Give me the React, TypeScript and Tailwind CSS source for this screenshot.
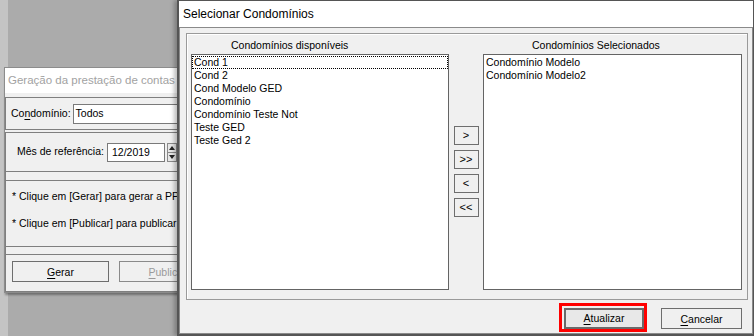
import React from 'react'

const FONT = { fontFamily: '"Liberation Sans", Arial, sans-serif' }

const disponiveis = ['Cond 1', 'Cond 2', 'Cond Modelo GED', 'Condomínio', 'Condomínio Teste Not', 'Teste GED', 'Teste Ged 2']
const selecionados = ['Condomínio Modelo', 'Condomínio Modelo2']

function Accel({ k, rest }: { k: string; rest: string }) {
  return (
    <>
      <span className="underline underline-offset-2">{k}</span>
      {rest}
    </>
  )
}

function MoveBtn({ label }: { label: string }) {
  return (
    <button className="flex h-[19px] w-[25px] items-center justify-center border border-[#6e6e6e] bg-[#f0f0f0] text-[11px] leading-none text-black">
      {label}
    </button>
  )
}

function BackWindow() {
  return (
    <div className="absolute left-[4px] top-[67px] flex h-[226px] w-[200px] flex-col border border-[#8c8c8c] bg-[#f0f0f0] text-[10.5px] text-black shadow-[1px_2px_2px_rgba(0,0,0,0.35)]">
      {/* title */}
      <div className="flex h-[25px] items-center bg-white pl-[3px] text-[11.5px] whitespace-nowrap text-[#a2a2a2]">Geração da prestação de contas</div>
      <div className="h-[4px]" />

      {/* condominio */}
      <div className="flex h-[33px] items-center border border-[#7f7f7f] pl-[5px]">
        <span className="mr-[2px] whitespace-nowrap">
          Co<span className="underline underline-offset-2">n</span>domínio:
        </span>
        <div className="h-[20px] flex-1 border border-[#7a7a7a] bg-white pl-[2px] leading-[16px]">Todos</div>
      </div>
      <div className="h-[2px]" />

      {/* mes */}
      <div className="flex h-[40px] items-center border border-[#7f7f7f] pl-[11px]">
        <span className="mr-[3px] whitespace-nowrap">Mês de referência:</span>
        <div className="h-[19px] w-[58px] border border-[#7a7a7a] bg-white pl-[4px] leading-[16px]">12/2019</div>
        <div className="ml-[2px] flex h-[19px] w-[10px] flex-col">
          <div className="flex flex-1 items-center justify-center border border-[#8a8a8a] bg-[#e8e8e8]">
            <svg width="6" height="4" viewBox="0 0 6 4"><path d="M3 0L6 4H0Z" fill="#222" /></svg>
          </div>
          <div className="flex flex-1 items-center justify-center border border-t-0 border-[#8a8a8a] bg-[#e8e8e8]">
            <svg width="6" height="4" viewBox="0 0 6 4"><path d="M0 0H6L3 4Z" fill="#222" /></svg>
          </div>
        </div>
      </div>
      <div className="h-[9px] border border-t-0 border-[#7f7f7f]" />

      {/* info */}
      <div className="flex h-[66px] flex-col border border-t-0 border-[#7f7f7f] pl-[6px] pt-[7px] whitespace-nowrap">
        <div className="leading-[16px]">* Clique em [Gerar] para gerar a PPC</div>
        <div className="mt-[11px] leading-[16px]">* Clique em [Publicar] para publicar</div>
      </div>
      <div className="h-[8px] border border-t-0 border-[#7f7f7f]" />

      {/* buttons */}
      <div className="flex flex-1 items-start gap-[10px] border border-t-0 border-[#7f7f7f] pl-[6px] pt-[6px]">
        <button className="h-[21px] w-[97px] shrink-0 border border-[#6e6e6e] bg-[#f0f0f0] leading-[18px]">
          <Accel k="G" rest="erar" />
        </button>
        <button className="h-[21px] w-[97px] shrink-0 border border-[#8a8a8a] bg-[#f0f0f0] leading-[18px] text-[#9a9a9a]">
          <Accel k="P" rest="ublicar" />
        </button>
      </div>
    </div>
  )
}

function ListBox({ items, focusFirst }: { items: string[]; focusFirst?: boolean }) {
  return (
    <div className="h-[236px] border border-[#646464] bg-white pt-[1px]">
      {items.map((it, i) => (
        <div
          key={it}
          className={`h-[13px] pl-[2px] text-[10.5px] leading-[13px] whitespace-nowrap text-black ${i === 0 && focusFirst ? 'outline-1 outline-dotted outline-offset-[-1px] outline-black' : ''}`}
        >
          {it}
        </div>
      ))}
    </div>
  )
}

function SelectDialog() {
  return (
    <div className="absolute left-[177px] top-0 flex h-[336px] w-[577px] flex-col border-t border-l-2 border-r border-b-2 border-[#555] bg-white text-[10.5px] text-black shadow-[-3px_0_4px_rgba(0,0,0,0.25)]">
      <div className="flex h-[26px] items-center pl-[4px] text-[12px]">Selecionar Condomínios</div>
      <div className="flex flex-1 flex-col border border-[#8a8a8a] bg-[#f0f0f0]">
        {/* group */}
        <div className="ml-[6px] mt-[5px] h-[267px] w-[562px] border border-[#9a9a9a] shadow-[inset_1px_1px_0_#fff]">
          <div className="flex pl-[4px] pt-[4px]">
            <div className="flex w-[258px] flex-col">
              <div className="h-[16px] pl-[40px] leading-[14px]">Condomínios disponíveis</div>
              <ListBox items={disponiveis} focusFirst />
            </div>
            <div className="flex w-[34px] flex-col items-center gap-[5px] pt-[88px]">
              <MoveBtn label=">" />
              <MoveBtn label=">>" />
              <MoveBtn label="<" />
              <MoveBtn label="<<" />
            </div>
            <div className="flex w-[259px] flex-col">
              <div className="h-[16px] pl-[49px] leading-[14px]">Condomínios Selecionados</div>
              <ListBox items={selecionados} />
            </div>
          </div>
        </div>

        {/* footer */}
        <div className="flex justify-end gap-[14px] pr-[10px] pt-[3px]">
          <div className="border-[3px] border-[#ff0000] p-[2px] pr-0 pb-0">
            <button className="h-[21px] w-[80px] border-2 border-[#6a6a6a] bg-[#e8e8e8] leading-[17px]">
              <Accel k="A" rest="tualizar" />
            </button>
          </div>
          <button className="mt-[5px] h-[21px] w-[81px] border border-[#6e6e6e] bg-[#f0f0f0] leading-[18px]">
            <Accel k="C" rest="ancelar" />
          </button>
        </div>
      </div>
    </div>
  )
}

export default function App() {
  return (
    <div className="relative h-[336px] w-[754px] overflow-hidden bg-[#ababab]" style={FONT}>
      <div className="absolute inset-y-0 left-0 w-[8px] bg-[#c4c4c4]" />
      <BackWindow />
      <SelectDialog />
    </div>
  )
}
